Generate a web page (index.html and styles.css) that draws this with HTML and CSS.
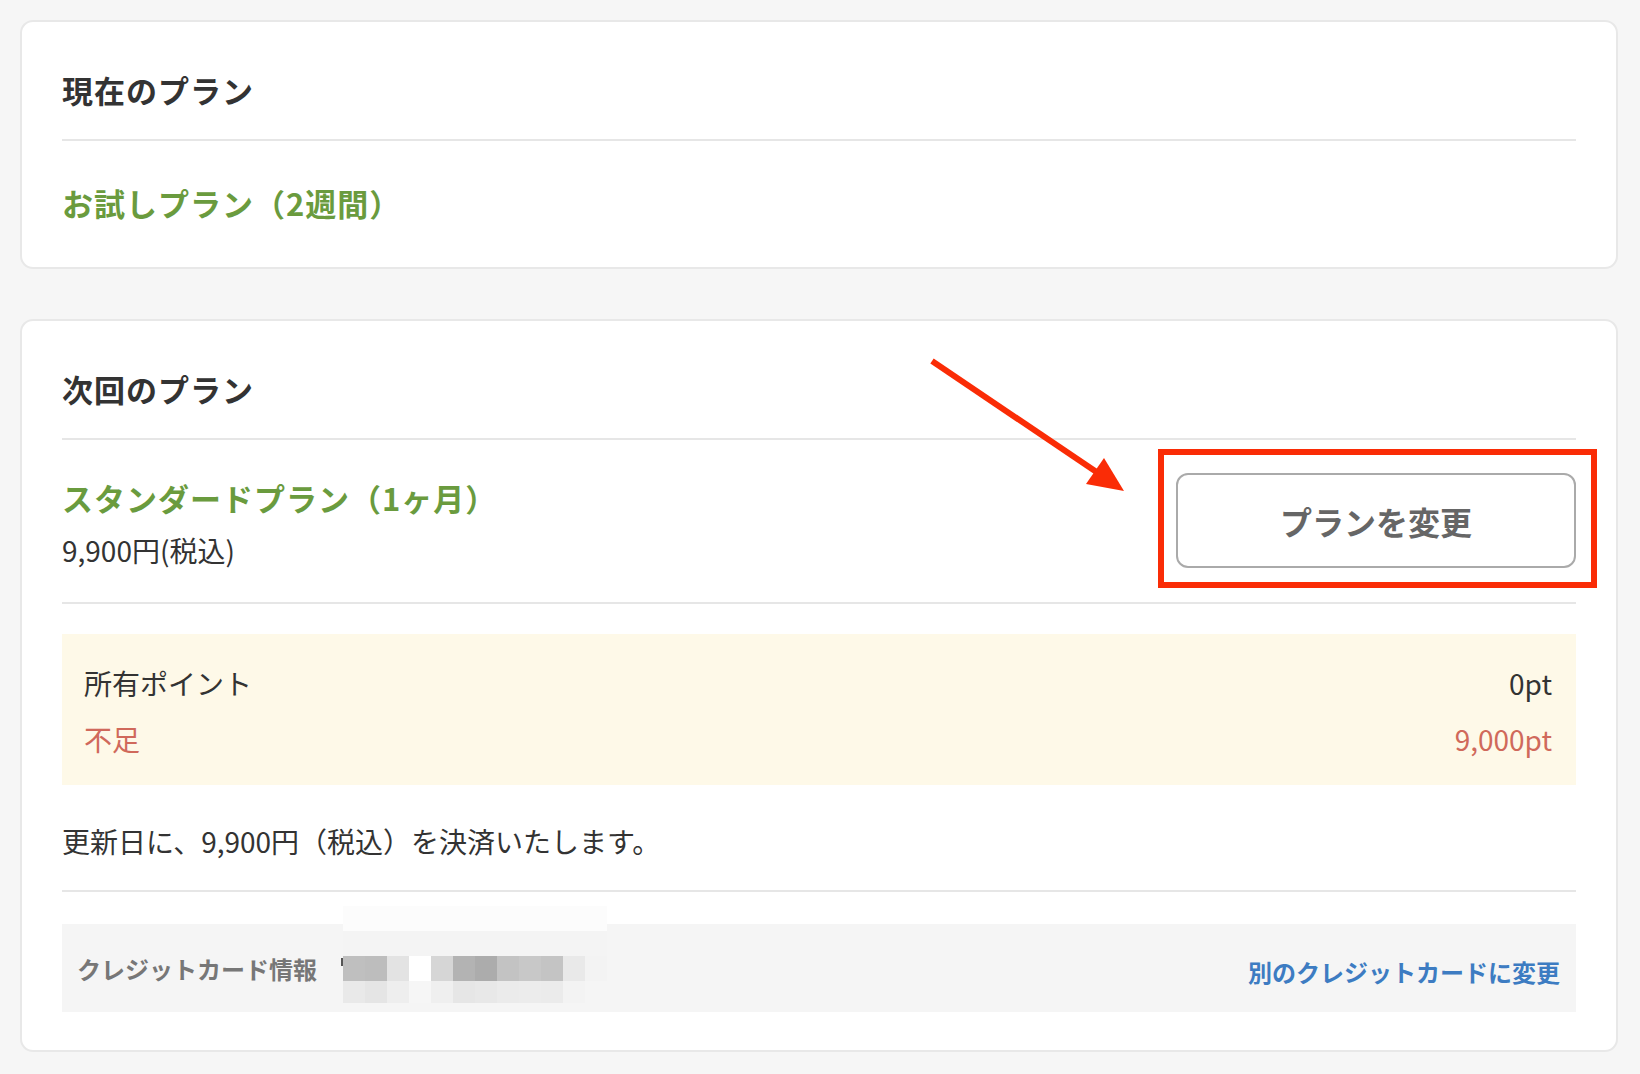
FILE: index.html
```
<!DOCTYPE html>
<html lang="ja">
<head>
    <meta charset="UTF-8">
    <meta name="viewport" content="width=device-width, initial-scale=1.0">
    <title>プラン</title>
    <link rel="stylesheet" href="styles.css">
</head>
<body>

<div class="page">
    <section class="card">
        <h2 class="card-title">現在のプラン</h2>
        <div class="card-body">
            <p class="plan-name">お試しプラン（2週間）</p>
        </div>
    </section>

    <section class="card card-next">
        <h2 class="card-title">次回のプラン</h2>

        <div class="plan-row">
            <div class="plan-info">
                <p class="plan-name">スタンダードプラン（1ヶ月）</p>
                <p class="plan-price">9,900円(税込)</p>
            </div>
            <div class="btn-wrap">
                <button class="btn-change">プランを変更</button>
                <span class="highlight"></span>
            </div>
        </div>

        <div class="points">
            <div class="points-row">
                <span>所有ポイント</span>
                <span>0pt</span>
            </div>
            <div class="points-row shortage">
                <span>不足</span>
                <span>9,000pt</span>
            </div>
        </div>

        <p class="notice">更新日に、9,900円（税込）を決済いたします。</p>

        <div class="card-info">
            <span class="card-label">クレジットカード情報</span>
            <svg class="mosaic" width="266" height="97" viewBox="0 0 266 97">
                <rect x="0" y="52" width="2" height="8" fill="#555"/>
                <rect x="2" y="0" width="264" height="25" fill="#fcfcfc"/>
                <rect x="2" y="25" width="264" height="25" fill="#f4f4f4"/>
                <rect x="2" y="50" width="22" height="25" fill="#bfbfbf"/>
                <rect x="24" y="50" width="22" height="25" fill="#bdbdbd"/>
                <rect x="46" y="50" width="22" height="25" fill="#e3e3e3"/>
                <rect x="68" y="50" width="22" height="25" fill="#ffffff"/>
                <rect x="90" y="50" width="22" height="25" fill="#d6d6d6"/>
                <rect x="112" y="50" width="22" height="25" fill="#b3b3b3"/>
                <rect x="134" y="50" width="22" height="25" fill="#acacac"/>
                <rect x="156" y="50" width="22" height="25" fill="#c3c3c3"/>
                <rect x="178" y="50" width="22" height="25" fill="#c8c8c8"/>
                <rect x="200" y="50" width="22" height="25" fill="#c4c4c4"/>
                <rect x="222" y="50" width="22" height="25" fill="#e9e9e9"/>
                <rect x="244" y="50" width="22" height="25" fill="#f3f3f3"/>
                <rect x="2" y="75" width="22" height="22" fill="#e9e9e9"/>
                <rect x="24" y="75" width="22" height="22" fill="#e5e5e5"/>
                <rect x="46" y="75" width="22" height="22" fill="#eeeeee"/>
                <rect x="68" y="75" width="22" height="22" fill="#f6f6f6"/>
                <rect x="90" y="75" width="22" height="22" fill="#efefef"/>
                <rect x="112" y="75" width="22" height="22" fill="#e6e6e6"/>
                <rect x="134" y="75" width="22" height="22" fill="#e8e8e8"/>
                <rect x="156" y="75" width="22" height="22" fill="#ebebeb"/>
                <rect x="178" y="75" width="22" height="22" fill="#ececec"/>
                <rect x="200" y="75" width="22" height="22" fill="#ebebeb"/>
                <rect x="222" y="75" width="22" height="22" fill="#f3f3f3"/>
                <rect x="244" y="75" width="22" height="22" fill="#f5f5f5"/>
            </svg>
            <a class="card-link" href="#">別のクレジットカードに変更</a>
        </div>

        <svg class="arrow" width="260" height="190" viewBox="0 0 260 190">
            <line x1="30" y1="20" x2="196" y2="132" stroke="#fa2c06" stroke-width="6"/>
            <polygon points="222,150 184,143 202,117" fill="#fa2c06"/>
        </svg>
    </section>
</div>

</body>
</html>
```

FILE: styles.css
```
body {
    margin: 0;
    background: #f6f6f6;
    font-family: "Noto Sans CJK JP", "Noto Sans", sans-serif;
    color: #333;
}
p {
    margin: 0;
}
.page {
    padding: 20px 22px 23px 20px;
}
.card {
    position: relative;
    background: #fff;
    border: 2px solid #e8e8e8;
    border-radius: 13px;
    padding: 0 40px;
}
.card-next {
    margin-top: 50px;
    padding-bottom: 38px;
}
.card-title {
    margin: 0;
    padding: 46px 0 27px;
    font-size: 31px;
    letter-spacing: 1px;
    line-height: 44px;
    font-weight: 700;
    color: #333;
    border-bottom: 2px solid #e6e6e6;
}
.card-body {
    padding: 40px 0 42px;
}
.plan-name {
    font-size: 31px;
    letter-spacing: 1px;
    line-height: 44px;
    font-weight: 700;
    color: #6a9b3e;
}
.plan-row {
    display: flex;
    justify-content: space-between;
    align-items: flex-start;
    padding: 33px 0 34px;
    border-bottom: 2px solid #e6e6e6;
}
.plan-info {
    margin-top: 3px;
}
.plan-price {
    margin-top: 12px;
    font-size: 28px;
    line-height: 36px;
    color: #333;
}
.btn-wrap {
    position: relative;
}
.btn-change {
    display: block;
    width: 400px;
    height: 95px;
    background: #fff;
    border: 2px solid #aaa;
    border-radius: 12px;
    font-family: inherit;
    font-size: 32px;
    font-weight: 700;
    color: #666;
    cursor: pointer;
}
.highlight {
    position: absolute;
    top: -24px;
    left: -18px;
    right: -21px;
    bottom: -20px;
    border: 6px solid #fa2c06;
}
.points {
    margin-top: 30px;
    padding: 29px 24px 26px 22px;
    background: #fef9e8;
    display: flex;
    flex-direction: column;
    gap: 16px;
}
.points-row {
    display: flex;
    justify-content: space-between;
    font-size: 28px;
    line-height: 40px;
    color: #333;
}
.points-row.shortage {
    color: #d0695b;
}
.notice {
    padding: 36px 0 29px;
    font-size: 28px;
    line-height: 40px;
    color: #333;
    border-bottom: 2px solid #e6e6e6;
}
.card-info {
    position: relative;
    margin-top: 32px;
    height: 88px;
    padding: 0 16px 0 15px;
    background: #f5f5f5;
    display: flex;
    align-items: center;
    justify-content: space-between;
}
.card-label {
    font-size: 24px;
    font-weight: 700;
    color: #777;
}
.mosaic {
    position: absolute;
    left: 279px;
    top: -18px;
}
.card-link {
    margin-top: 6px;
    font-size: 24px;
    font-weight: 700;
    color: #3d7cc2;
    text-decoration: none;
}
.arrow {
    position: absolute;
    left: 880px;
    top: 20px;
}
```
